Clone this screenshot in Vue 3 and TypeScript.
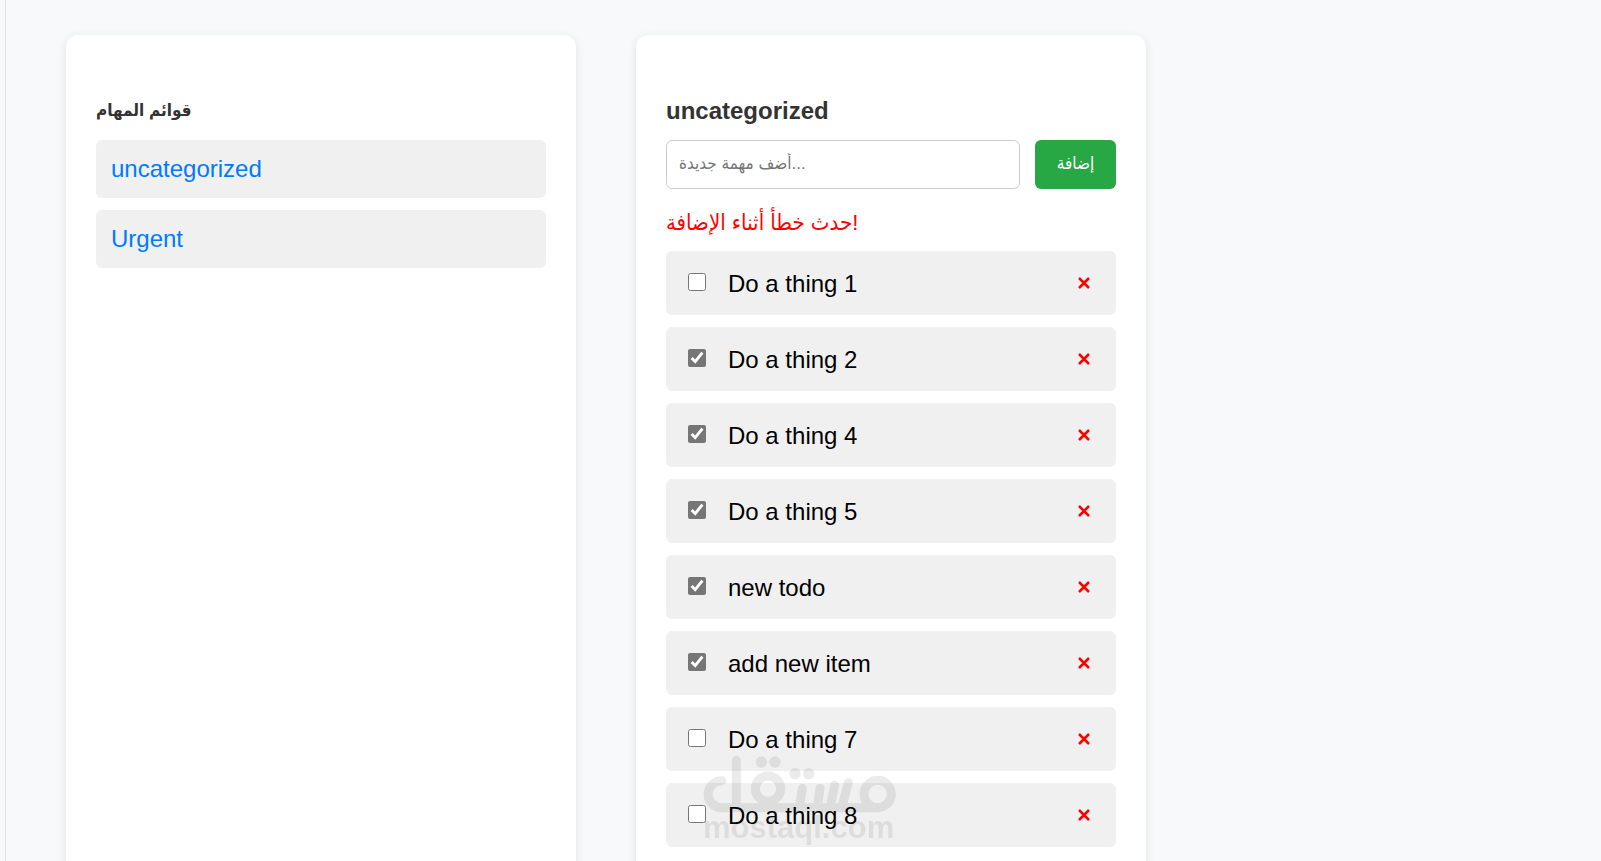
<script setup lang="ts">
import { ref } from 'vue'

interface Task {
  id: number
  title: string
  done: boolean
}

const lists = ['uncategorized', 'Urgent']
const current = ref(lists[0])
const draft = ref('')
const error = ref('حدث خطأ أثناء الإضافة!')

const tasks = ref<Task[]>([
  { id: 1, title: 'Do a thing 1', done: false },
  { id: 2, title: 'Do a thing 2', done: true },
  { id: 3, title: 'Do a thing 4', done: true },
  { id: 4, title: 'Do a thing 5', done: true },
  { id: 5, title: 'new todo', done: true },
  { id: 6, title: 'add new item', done: true },
  { id: 7, title: 'Do a thing 7', done: false },
  { id: 8, title: 'Do a thing 8', done: false },
])

function addTask() {
  const title = draft.value.trim()
  if (!title) return
  tasks.value.push({ id: Date.now(), title, done: false })
  draft.value = ''
  error.value = ''
}

function removeTask(id: number) {
  tasks.value = tasks.value.filter((t) => t.id !== id)
}
</script>

<template>
  <div class="page">
    <main class="board">
      <section class="card">
        <h2 class="title arabic" lang="ar">قوائم المهام</h2>
        <ul class="lists">
          <li v-for="name in lists" :key="name">
            <a class="list-link" href="#" @click.prevent="current = name">{{ name }}</a>
          </li>
        </ul>
      </section>

      <section class="card">
        <h2 class="title">{{ current }}</h2>
        <form class="add" @submit.prevent="addTask">
          <input v-model="draft" class="field" type="text" placeholder="أضف مهمة جديدة..." aria-label="أضف مهمة جديدة" />
          <button class="submit" type="submit">إضافة</button>
        </form>
        <p v-if="error" class="error" lang="ar">{{ error }}</p>
        <ul class="tasks">
          <li v-for="task in tasks" :key="task.id" class="task">
            <input :id="`task-${task.id}`" v-model="task.done" class="check" type="checkbox" />
            <label class="name" :for="`task-${task.id}`">{{ task.title }}</label>
            <button class="remove" type="button" aria-label="حذف" @click="removeTask(task.id)">
              <svg viewBox="0 0 24 24" width="12" height="12" aria-hidden="true">
                <path d="M2 2 22 22M22 2 2 22" />
              </svg>
            </button>
          </li>
        </ul>
      </section>
    </main>

    <div class="watermark">
      <svg class="mark" viewBox="99 72 582 174" width="194" height="58" aria-hidden="true">
        <circle cx="623" cy="189" r="41" />
        <path d="M623 230H155A39 39 0 0 1 155 149M199 88V230" />
        <circle cx="294" cy="173" r="38" />
        <path d="M397 172 388 230M450 172 442 230M494 163 480 230M535 155 515 230" />
        <g class="dots">
          <circle cx="274" cy="93" r="17" />
          <circle cx="315" cy="93" r="17" />
          <circle cx="375" cy="128" r="17" />
          <circle cx="416" cy="128" r="17" />
        </g>
      </svg>
      <span class="domain">mostaql.com</span>
    </div>
  </div>
</template>

<style>
body {
  margin: 0;
}
</style>

<style scoped>
.page {
  box-sizing: border-box;
  position: relative;
  height: 100vh;
  padding-left: 5px;
  overflow: hidden;
  background: #f8f8f8;
  font-family: "Liberation Sans", Arial, "DejaVu Sans Condensed", "DejaVu Sans", sans-serif;
  font-size: 24px;
  color: #000;
}

.board {
  box-sizing: border-box;
  display: flex;
  gap: 60px;
  height: 100%;
  padding: 35px 60px;
  overflow-y: auto;
  scrollbar-width: none;
  border-left: 1px solid #dee2e6;
  background: #f8f9fa;
}

.card {
  box-sizing: border-box;
  flex: 0 1 510px;
  height: max-content;
  min-height: 100vh;
  padding: 59px 30px;
  border-radius: 12px;
  background: #fff;
  box-shadow: 0 2px 10px rgba(0, 0, 0, 0.1);
}

.title {
  margin: 0 0 13px;
  font-size: 24px;
  line-height: 33px;
  color: #333;
}

.arabic {
  font-size: 17px;
}

.lists,
.tasks {
  display: flex;
  flex-direction: column;
  gap: 12px;
  margin: 0;
  padding: 0;
  list-style: none;
}

.list-link {
  display: block;
  padding: 15px;
  border-radius: 6px;
  background: #f0f0f0;
  line-height: 28px;
  color: #007bff;
  text-decoration: none;
}

.add {
  display: flex;
  gap: 15px;
}

.field {
  box-sizing: border-box;
  flex: 1;
  min-width: 0;
  height: 49px;
  padding: 0 12px 2px;
  border: 1px solid #ccc;
  border-radius: 6px;
  background: #fff;
  font: inherit;
  font-size: 17px;
}

.field::placeholder {
  color: #757575;
}

.submit {
  min-width: 81px;
  padding: 0 20px 2px;
  border: 0;
  border-radius: 6px;
  background: #28a745;
  font: inherit;
  font-size: 17px;
  color: #fff;
}

.error {
  margin: 20px 0 14px;
  font-size: 22px;
  line-height: 28px;
  color: #f00;
}

.task {
  display: flex;
  align-items: center;
  padding: 16px 22px 14px;
  border-radius: 6px;
  background: #f0f0f0;
  line-height: 34px;
}

.check {
  width: 18px;
  height: 18px;
  margin: 0 22px 4px 0;
  accent-color: #767676;
}

.name {
  flex: 1;
}

.remove {
  display: flex;
  padding: 4px 4px 6px;
  border: 0;
  background: none;
}

.remove path {
  fill: none;
  stroke: #f00;
  stroke-width: 5;
}

.watermark {
  position: absolute;
  left: 703px;
  bottom: 18px;
  display: flex;
  flex-direction: column;
  opacity: 0.08;
  pointer-events: none;
}

.mark {
  fill: none;
  stroke: #000;
  stroke-width: 27;
  stroke-linecap: round;
}

.dots {
  fill: #000;
  stroke: none;
}

.domain {
  font-size: 31px;
  font-weight: bold;
  line-height: 30px;
}
</style>
